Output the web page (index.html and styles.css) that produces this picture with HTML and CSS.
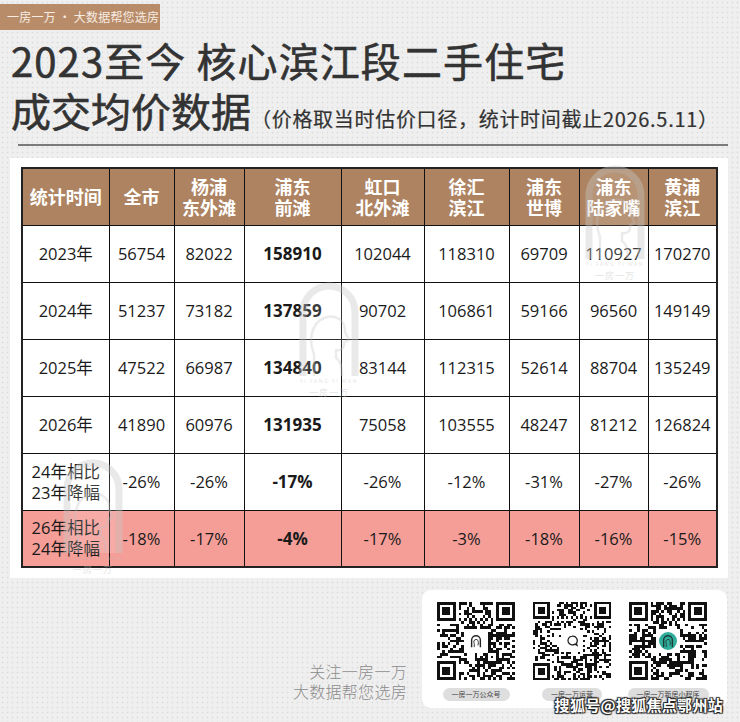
FILE: index.html
```html
<!DOCTYPE html>
<html lang="zh-CN">
<head>
<meta charset="utf-8">
<title>核心滨江段二手住宅成交均价数据</title>
<link rel="stylesheet" href="styles.css">
</head>
<body>
<div class="tag">一房一万 • 大数据帮您选房</div>
<h1 class="title"><span class="l1">2023至今 核心滨江段二手住宅</span><br>成交均价数据<span class="sub">（价格取当时估价口径，统计时间截止2026.5.11）</span></h1>
<div class="rule"></div>

<div class="panel">
  <table>
    <colgroup>
      <col style="width:87px"><col style="width:65px"><col style="width:70px"><col style="width:97px"><col style="width:83px"><col style="width:85px"><col style="width:70px"><col style="width:69px"><col style="width:69px">
    </colgroup>
    <tr class="head">
      <th>统计时间</th><th>全市</th><th>杨浦<br>东外滩</th><th>浦东<br>前滩</th><th>虹口<br>北外滩</th><th>徐汇<br>滨江</th><th>浦东<br>世博</th><th>浦东<br>陆家嘴</th><th>黄浦<br>滨江</th>
    </tr>
    <tr><td>2023年</td><td>56754</td><td>82022</td><td class="b">158910</td><td>102044</td><td>118310</td><td>69709</td><td>110927</td><td>170270</td></tr>
    <tr><td>2024年</td><td>51237</td><td>73182</td><td class="b">137859</td><td>90702</td><td>106861</td><td>59166</td><td>96560</td><td>149149</td></tr>
    <tr><td>2025年</td><td>47522</td><td>66987</td><td class="b">134840</td><td>83144</td><td>112315</td><td>52614</td><td>88704</td><td>135249</td></tr>
    <tr><td>2026年</td><td>41890</td><td>60976</td><td class="b">131935</td><td>75058</td><td>103555</td><td>48247</td><td>81212</td><td>126824</td></tr>
    <tr><td>24年相比<br>23年降幅</td><td>-26%</td><td>-26%</td><td class="b">-17%</td><td>-26%</td><td>-12%</td><td>-31%</td><td>-27%</td><td>-26%</td></tr>
    <tr class="pink"><td>26年相比<br>24年降幅</td><td>-18%</td><td>-17%</td><td class="b">-4%</td><td>-17%</td><td>-3%</td><td>-18%</td><td>-16%</td><td>-15%</td></tr>
  </table>

  <div class="wm wm-right">
    <svg viewBox="0 0 64 96" width="64" height="96"><path class="wm-fill" d="M6 96V32A26 26 0 0 1 58 32V96Z"/><path class="wm-arch" d="M6 96V32A26 26 0 0 1 58 32V96"/><path class="wm-face" d="M17 96V74C12 62 13 44 27 38C40 33 49 42 48 52L52 60L47 62C48 67 45 71 39 70V78C43 80 45 86 45 96"/></svg>
    <div class="wm-en">YI FANG YI WAN</div>
    <div class="wm-cn">一房一万</div>
  </div>
  <div class="wm wm-center">
    <svg viewBox="0 0 64 96" width="64" height="96"><path class="wm-fill" d="M6 96V32A26 26 0 0 1 58 32V96Z"/><path class="wm-arch" d="M6 96V32A26 26 0 0 1 58 32V96"/><path class="wm-face" d="M17 96V74C12 62 13 44 27 38C40 33 49 42 48 52L52 60L47 62C48 67 45 71 39 70V78C43 80 45 86 45 96"/></svg>
    <div class="wm-en">YI FANG YI WAN</div>
    <div class="wm-cn">一房一万</div>
  </div>
  <div class="wm wm-left">
    <svg viewBox="0 0 64 96" width="64" height="96"><path class="wm-fill" d="M6 96V32A26 26 0 0 1 58 32V96Z"/><path class="wm-arch" d="M6 96V32A26 26 0 0 1 58 32V96"/><path class="wm-face" d="M17 96V74C12 62 13 44 27 38C40 33 49 42 48 52L52 60L47 62C48 67 45 71 39 70V78C43 80 45 86 45 96"/></svg>
    <div class="wm-en">YI FANG YI WAN</div>
    <div class="wm-cn">一房一万</div>
  </div>
</div>

<div class="footer">
  <div class="follow">关注一房一万<br>大数据帮您选房</div>
  <div class="qrcard">
    <div class="qritem">
      <div class="qr">
        <div class="qrsvg" data-n="29" data-seed="1234" data-d="0.5"></div>
        <div class="logo logo-white">
          <svg viewBox="0 0 16 16" width="14" height="14"><path d="M3 15V7A5 5 0 0 1 13 7V15" fill="none" stroke="#222" stroke-width="1.6"/><path d="M6 15V11C5 9 5.5 6.5 8 6.2C10 6 10.8 8 10.5 9.5L11.2 10.6L10.3 11V13" fill="none" stroke="#222" stroke-width="1"/></svg>
        </div>
      </div>
      <div class="pill">一房一万公众号</div>
    </div>
    <div class="qritem">
      <div class="qr">
        <div class="qrsvg" data-n="33" data-seed="98765" data-d="0.42"></div>
        <div class="logo logo-white">
          <svg viewBox="0 0 16 16" width="14" height="14"><path d="M8 2.5A5.2 5 0 1 0 11.5 11.6L13.8 13L13 10.4A5.2 5 0 0 0 8 2.5Z" fill="none" stroke="#222" stroke-width="1.5"/></svg>
        </div>
      </div>
      <div class="pill">一房一万运营</div>
    </div>
    <div class="qritem">
      <div class="qr">
        <div class="qrsvg" data-n="29" data-seed="55555" data-d="0.52"></div>
        <div class="logo logo-teal">
          <svg viewBox="0 0 16 16" width="14" height="14"><path d="M3 15V7A5 5 0 0 1 13 7V15" fill="none" stroke="#1d3b36" stroke-width="1.6"/><path d="M6 15V11C5 9 5.5 6.5 8 6.2C10 6 10.8 8 10.5 9.5L11.2 10.6L10.3 11V13" fill="none" stroke="#1d3b36" stroke-width="1"/></svg>
        </div>
      </div>
      <div class="pill">一房一万新房小程序</div>
    </div>
  </div>
</div>

<div class="sohu">搜狐号@搜狐焦点鄂州站</div>

<script src="script.js"></script>
</body>
</html>
```

FILE: styles.css
```css
* { box-sizing: border-box; margin: 0; padding: 0; }
html, body { width: 740px; height: 722px; overflow: hidden; }
body {
  position: relative;
  background-color: #efefef;
  background-image: radial-gradient(circle, #dcdcdc 0.8px, transparent 1.1px);
  background-size: 5px 5px;
  font-family: "Noto Sans CJK SC", sans-serif;
  color: #333;
}
.tag {
  margin-top: 4px;
  width: 160px;
  height: 26px;
  background: #b98c69;
  color: #f6ece4;
  font-size: 12px;
  line-height: 26px;
  padding-left: 7px;
  letter-spacing: 0.2px;
  white-space: nowrap;
}
.title {
  margin-top: 5px;
  padding-left: 11px;
  font-size: 40px;
  line-height: 50px;
  font-weight: 400;
  color: #333;
  white-space: nowrap;
  -webkit-text-stroke: 0.6px #333;
}
.l1 { letter-spacing: 1.1px; }
.sub {
  font-size: 20px;
  line-height: 20px;
  font-weight: 400;
  letter-spacing: 0.7px;
  -webkit-text-stroke: 0.2px #333;
}
.rule {
  margin: 9px 12px 0 18px;
  height: 2px;
  background: #7a7a7a;
}
.panel {
  position: relative;
  margin: 12px 12px 0 10px;
  background: #fff;
  padding: 9px 12px 10px 11px;
}
table {
  border-collapse: collapse;
  table-layout: fixed;
  width: 695px;
  border: 2px solid #222;
}
th, td {
  border: 1px solid #111;
  height: 57px;
  text-align: center;
  vertical-align: middle;
  font-family: "Open Sans", "Noto Sans CJK SC", sans-serif;
  line-height: 21px;
  padding: 0;
}
th {
  background: #ad8361;
  color: #fff;
  font-weight: 700;
  font-size: 18px;
  font-family: "Noto Sans CJK SC", sans-serif;
}
td {
  font-size: 16.5px;
  color: #1a1a1a;
  white-space: nowrap;
}
td.b { font-weight: 700; font-size: 17px; }
tr.pink td { background: #f59e98; }

.wm {
  position: absolute;
  width: 72px;
  display: flex;
  flex-direction: column;
  align-items: center;
  opacity: 0.4;
  pointer-events: none;
}
.wm-fill { fill: rgba(255,255,255,0.35); }
.wm-arch { fill: none; stroke: #c9c9c9; stroke-width: 7; }
.wm-face { fill: none; stroke: #cfcfcf; stroke-width: 2.5; stroke-linejoin: round; }
.wm-en { font-family: "Open Sans", sans-serif; font-size: 5px; letter-spacing: 1.5px; color: #bbb; margin-top: 2px; white-space: nowrap; }
.wm-cn { font-size: 9px; color: #bbb; margin-top: 2px; letter-spacing: 1px; }
.wm-right { left: 569px; top: 5px; }
.wm-center { left: 283px; top: 122px; }
.wm-left { left: 47px; top: 299px; }

.footer {
  display: flex;
  justify-content: flex-end;
  align-items: flex-end;
  gap: 15px;
  margin: 12px 13px 0 0;
}
.follow {
  font-size: 16px;
  line-height: 20px;
  color: #8c8c8c;
  text-align: right;
  margin-bottom: 7px;
  letter-spacing: 0.3px;
  font-weight: 300;
}
.qrcard {
  width: 305px;
  height: 118px;
  background: #fff;
  border-radius: 9px;
  padding: 12px 0 0 15px;
  display: flex;
  gap: 18px;
}
.qritem {
  width: 78px;
  display: flex;
  flex-direction: column;
  align-items: center;
}
.qr {
  position: relative;
  width: 78px;
  height: 78px;
}
.qrsvg svg { display: block; }
.logo {
  position: absolute;
  left: 50%;
  top: 50%;
  transform: translate(-50%, -50%);
  display: flex;
  align-items: center;
  justify-content: center;
}
.logo-white { width: 18px; height: 18px; background: #fff; border-radius: 3px; }
.logo-teal { width: 22px; height: 22px; background: #2fae9b; border-radius: 50%; border: 2px solid #fff; }
.pill {
  margin-top: 8px;
  height: 13px;
  border-radius: 7px;
  background: #dedede;
  color: #444;
  font-size: 7px;
  line-height: 13px;
  padding: 0 9px;
  white-space: nowrap;
}
.sohu {
  position: absolute;
  right: 17px;
  bottom: 7px;
  font-size: 15px;
  font-weight: 700;
  color: #fff;
  letter-spacing: 0.3px;
  text-shadow: 0 0 1px #222, 1px 1px 1px #222, -1px -1px 1px #222, 1px -1px 1px #222, -1px 1px 1px #222;
  white-space: nowrap;
}
```

FILE: script.js
```js
(function () {
  function rng(s) {
    return function () { s = (s * 16807) % 2147483647; return (s - 1) / 2147483646; };
  }
  function build(el) {
    var n = +el.dataset.n, seed = +el.dataset.seed, d = +(el.dataset.d || 0.5);
    var r = rng(seed), m = [], x, y, dx, dy;
    for (y = 0; y < n; y++) { m.push([]); for (x = 0; x < n; x++) m[y].push(r() < d); }
    function set(x, y, v) { if (x >= 0 && y >= 0 && x < n && y < n) m[y][x] = v; }
    function finder(ox, oy) {
      for (dy = -1; dy <= 7; dy++) for (dx = -1; dx <= 7; dx++) {
        var inside = dx >= 0 && dx <= 6 && dy >= 0 && dy <= 6;
        var v = inside && (dx === 0 || dx === 6 || dy === 0 || dy === 6 || (dx >= 2 && dx <= 4 && dy >= 2 && dy <= 4));
        set(ox + dx, oy + dy, v);
      }
    }
    finder(0, 0); finder(n - 7, 0); finder(0, n - 7);
    for (var i = 8; i < n - 8; i++) { set(i, 6, i % 2 === 0); set(6, i, i % 2 === 0); }
    var a = n - 9;
    for (dy = -2; dy <= 2; dy++) for (dx = -2; dx <= 2; dx++) set(a + dx, a + dy, Math.max(Math.abs(dx), Math.abs(dy)) !== 1);
    var c = Math.floor(n / 2), h = Math.round(n * 0.13);
    for (y = c - h; y <= c + h; y++) for (x = c - h; x <= c + h; x++) set(x, y, false);
    var p = '';
    for (y = 0; y < n; y++) for (x = 0; x < n; x++) if (m[y][x]) p += 'M' + x + ' ' + y + 'h1v1h-1z';
    el.innerHTML = '<svg viewBox="0 0 ' + n + ' ' + n + '" width="78" height="78" shape-rendering="crispEdges"><path d="' + p + '" fill="#111"/></svg>';
  }
  var els = document.querySelectorAll('.qrsvg');
  for (var k = 0; k < els.length; k++) build(els[k]);
})();
```
